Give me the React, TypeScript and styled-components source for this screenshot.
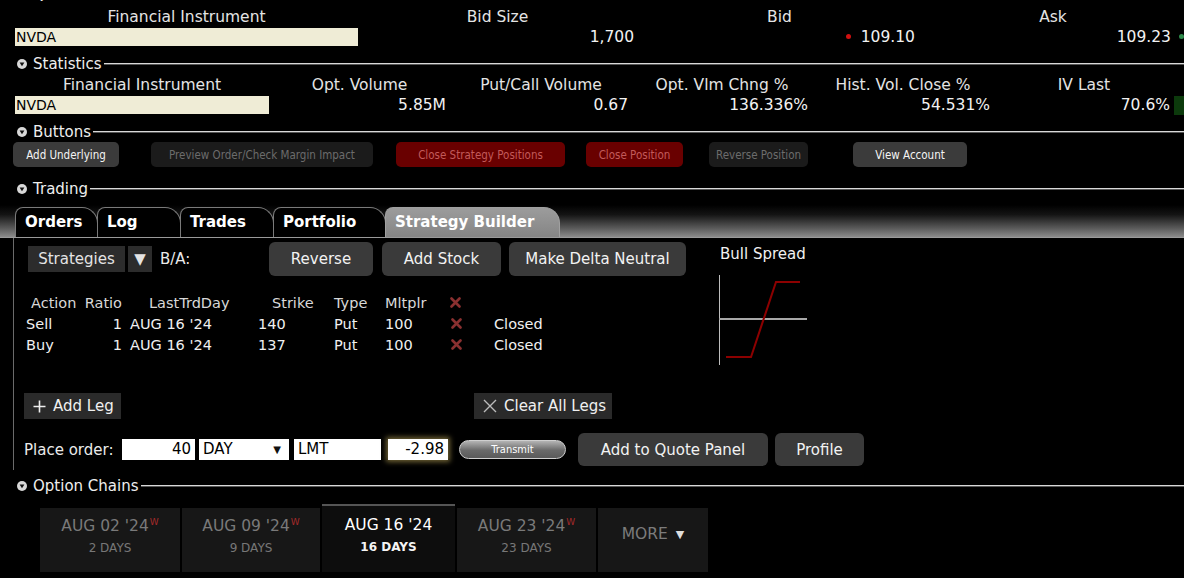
import styled, { createGlobalStyle } from "styled-components";

const GlobalStyle = createGlobalStyle`
  html, body {
    margin: 0;
    padding: 0;
    background: #000;
  }
  body {
    font-family: "DejaVu Sans", "Liberation Sans", sans-serif;
    color: #eee;
  }
`;

const Page = styled.div`
  width: 1184px;
  height: 578px;
  overflow: hidden;
  background: #000;
`;

/* ---------- section headers ---------- */

const SectionRow = styled.div<{ mt?: number }>`
  display: flex;
  align-items: center;
  height: 18px;
  padding-left: 17px;
  margin-top: ${({ mt = 0 }) => mt}px;
`;

const SectionLabel = styled.span`
  font-size: 15px;
  color: #eee;
  margin: 0 2px 0 6px;
  white-space: nowrap;
`;

const SectionLine = styled.div`
  flex: 1;
  height: 0;
  border-top: 1px solid #d8d8d8;
  border-bottom: 1px solid #555;
`;

const CollapseIcon = () => (
  <svg width="10" height="10" viewBox="0 0 10 10">
    <circle cx="5" cy="5" r="5" fill="#d8d8d8" />
    <path d="M2.6 3.6 L7.4 3.6 L5 7.2 Z" fill="#111" />
  </svg>
);

const Section = ({ title, mt }: { title: string; mt?: number }) => (
  <SectionRow mt={mt}>
    <CollapseIcon />
    <SectionLabel>{title}</SectionLabel>
    <SectionLine />
  </SectionRow>
);

/* ---------- quote / statistics grids ---------- */

const DataGrid = styled.div<{ cols: string; mt?: number }>`
  display: grid;
  grid-template-columns: ${({ cols }) => cols};
  padding-left: 15px;
  margin-top: ${({ mt = 0 }) => mt}px;
  row-gap: 1px;
`;

const HeadCell = styled.div`
  text-align: center;
  font-size: 15.5px;
  color: #e4e4e4;
  height: 19px;
  line-height: 19px;
  white-space: nowrap;
`;

const SymbolCell = styled.div`
  background: #efecd6;
  color: #000;
  font-size: 14px;
  height: 18px;
  line-height: 18px;
  padding-left: 1px;
`;

const ValueCell = styled.div<{ pr?: number }>`
  text-align: right;
  font-size: 15.5px;
  height: 19px;
  line-height: 19px;
  color: #f2f2f2;
  padding-right: ${({ pr = 4 }) => pr}px;
  white-space: nowrap;
`;

const TickDot = styled.span<{ color: string; after?: boolean }>`
  display: inline-block;
  width: 5px;
  height: 5px;
  border-radius: 50%;
  background: ${({ color }) => color};
  vertical-align: middle;
  margin: ${({ after }) => (after ? "0 0 2px 8px" : "0 10px 2px 0")};
`;

const TrendBox = styled.div`
  height: 19px;
  background: #0c3a0c;
`;

/* ---------- button strip ---------- */

const ButtonStrip = styled.div`
  display: flex;
  align-items: center;
  height: 25px;
  margin-top: 1px;
`;

type Tone = "plain" | "muted" | "danger";

const tones: Record<Tone, { bg: string; fg: string }> = {
  plain: { bg: "#3b3b3b", fg: "#f4f4f4" },
  muted: { bg: "#1b1b1b", fg: "#6c6c6c" },
  danger: { bg: "#690000", fg: "#c25a5a" },
};

const PanelButton = styled.div<{ w: number; ml: number; tone: Tone }>`
  width: ${({ w }) => w}px;
  margin-left: ${({ ml }) => ml}px;
  height: 25px;
  border-radius: 5px;
  background: ${({ tone }) => tones[tone].bg};
  color: ${({ tone }) => tones[tone].fg};
  font-size: 11.5px;
  font-stretch: condensed;
  display: flex;
  align-items: center;
  justify-content: center;
  white-space: nowrap;
`;

/* ---------- tabs ---------- */

const TabBar = styled.div`
  margin-top: 7px;
  height: 32px;
  display: flex;
  align-items: flex-end;
  padding-left: 15px;
  background: linear-gradient(#000 0%, #141414 30%, #5e5e5e 75%, #8a8a8a 100%);
  border-bottom: 1px solid #9a9a9a;
`;

const Tab = styled.div<{ w: number; active?: boolean }>`
  width: ${({ w }) => w}px;
  height: 30px;
  box-sizing: border-box;
  padding: 5px 0 0 9px;
  font-size: 15px;
  font-weight: bold;
  color: #fff;
  border: 1px solid ${({ active }) => (active ? "#a0a0a0" : "#7a7a7a")};
  border-bottom: none;
  border-radius: 8px 16px 0 0;
  background: ${({ active }) => (active ? "linear-gradient(#9c9c9c, #858585)" : "#000")};
  margin-right: -1px;
`;

const TradingPanel = styled.div`
  margin-left: 13px;
  border-left: 1px solid #6a6a6a;
  padding: 4px 0 0 10px;
  height: 228px;
  margin-bottom: 7px;
`;

const TopArea = styled.div`
  display: flex;
  height: 123px;
`;

const BuilderColumn = styled.div`
  width: 662px;
`;

const Toolbar = styled.div`
  display: flex;
  align-items: center;
  height: 34px;
`;

const SelectBox = styled.div<{ w: number; ml?: number }>`
  width: ${({ w }) => w}px;
  margin-left: ${({ ml = 0 }) => ml}px;
  height: 26px;
  background: #2c2c2c;
  color: #e4e4e4;
  font-size: 15px;
  display: flex;
  align-items: center;
  justify-content: center;
`;

const PlainLabel = styled.span<{ ml?: number; w?: number }>`
  font-size: 15px;
  color: #eaeaea;
  margin-left: ${({ ml = 0 }) => ml}px;
  width: ${({ w }) => (w ? `${w}px` : "auto")};
  white-space: nowrap;
`;

const RoundButton = styled.div<{ w: number; ml: number; h?: number }>`
  width: ${({ w }) => w}px;
  height: ${({ h = 34 }) => h}px;
  margin-left: ${({ ml }) => ml}px;
  background: #3a3a3a;
  border-radius: 6px;
  color: #f2f2f2;
  font-size: 15px;
  display: flex;
  align-items: center;
  justify-content: center;
  white-space: nowrap;
`;

/* ---------- legs table ---------- */

const LegTable = styled.div`
  margin: 16px 0 0 2px;
  display: grid;
  grid-template-columns: 57px 39px 128px 80px 51px 65px 44px 80px;
  grid-auto-rows: 21px;
  font-size: 14.5px;
  align-items: center;
`;

const LegCell = styled.div<{ pl?: number; right?: boolean; dim?: boolean }>`
  padding-left: ${({ pl = 0 }) => pl}px;
  text-align: ${({ right }) => (right ? "right" : "left")};
  color: ${({ dim }) => (dim ? "#d8d8d8" : "#f0f0f0")};
  white-space: nowrap;
`;

const RemoveMark = () => (
  <svg width="11" height="11" viewBox="0 0 11 11">
    <path d="M1.5 1.5 L9.5 9.5 M9.5 1.5 L1.5 9.5" stroke="#8a3030" strokeWidth="2.6" strokeLinecap="round" />
  </svg>
);

/* ---------- payoff chart ---------- */

const ChartColumn = styled.div`
  margin-left: 34px;
  padding-top: 3px;
`;

const ChartTitle = styled.div`
  font-size: 15px;
  color: #f0f0f0;
  height: 17px;
`;

const PayoffChart = () => (
  <svg width="92" height="92" viewBox="0 0 92 92" style={{ display: "block", marginTop: 12, marginLeft: -1 }}>
    <line x1="0.5" y1="1" x2="0.5" y2="91" stroke="#bdbdbd" strokeWidth="1" />
    <line x1="0" y1="45" x2="88" y2="45" stroke="#a8a8a8" strokeWidth="2" />
    <polyline points="7,83 32,83 57,8 81,8" fill="none" stroke="#8c0000" strokeWidth="2" />
  </svg>
);

/* ---------- leg actions / order line ---------- */

const ActionRow = styled.div`
  display: flex;
  align-items: center;
  margin-top: 28px;
  height: 26px;
`;

const FlatButton = styled.div<{ w: number; ml?: number }>`
  width: ${({ w }) => w}px;
  margin-left: ${({ ml = 0 }) => ml}px;
  height: 26px;
  background: #2a2a2a;
  color: #f0f0f0;
  font-size: 15px;
  display: flex;
  align-items: center;
  gap: 7px;
  padding-left: 9px;
  box-sizing: border-box;
  white-space: nowrap;
`;

const OrderRow = styled.div`
  display: flex;
  align-items: center;
  margin-top: 14px;
  height: 33px;
`;

const Field = styled.div<{ w: number; ml: number; right?: boolean; glow?: boolean }>`
  width: ${({ w }) => w}px;
  margin-left: ${({ ml }) => ml}px;
  height: 21px;
  box-sizing: border-box;
  background: #fff;
  color: #000;
  font-size: 15px;
  line-height: 21px;
  padding: 0 4px;
  display: flex;
  align-items: center;
  justify-content: ${({ right }) => (right ? "flex-end" : "space-between")};
  box-shadow: ${({ glow }) => (glow ? "0 0 5px 2px rgba(170, 150, 80, 0.65)" : "none")};
`;

const Caret = styled.span`
  font-size: 10px;
  color: #111;
  margin-right: 4px;
`;

const TransmitPill = styled.div`
  width: 107px;
  height: 19px;
  margin-left: 11px;
  box-sizing: border-box;
  border-radius: 10px;
  border: 1px solid #cfcfcf;
  background: linear-gradient(#b4b4b4, #6a6a6a 55%, #5a5a5a);
  color: #fff;
  font-size: 11px;
  font-stretch: condensed;
  display: flex;
  align-items: center;
  justify-content: center;
`;

/* ---------- option chain expiries ---------- */

const ExpiryStrip = styled.div`
  display: flex;
  align-items: flex-end;
  gap: 2px;
  margin: 9px 0 0 40px;
  height: 68px;
`;

const Expiry = styled.div<{ w: number; active?: boolean }>`
  width: ${({ w }) => w}px;
  height: ${({ active }) => (active ? 68 : 64)}px;
  box-sizing: border-box;
  background: ${({ active }) => (active ? "#0d0d0d" : "#171717")};
  border-top: ${({ active }) => (active ? "2px solid #555" : "none")};
  display: flex;
  flex-direction: column;
  align-items: center;
  padding-top: ${({ active }) => (active ? 10 : 9)}px;
  color: ${({ active }) => (active ? "#fff" : "#7a7a7a")};
`;

const ExpiryDate = styled.div`
  font-size: 15.5px;
  height: 20px;
  white-space: nowrap;
`;

const WeeklyMark = styled.sup`
  font-size: 9px;
  color: #a52a2a;
  margin-left: 1px;
  vertical-align: 6px;
`;

const ExpiryDays = styled.div<{ active?: boolean }>`
  font-size: 12px;
  margin-top: 4px;
  font-weight: ${({ active }) => (active ? "bold" : "normal")};
  color: ${({ active }) => (active ? "#f4f4f4" : "#777")};
`;

const MoreTab = styled.div`
  width: 110px;
  height: 64px;
  background: #171717;
  color: #7c7c7c;
  font-size: 15.5px;
  display: flex;
  justify-content: center;
  padding-top: 17px;
  box-sizing: border-box;
  gap: 8px;
`;

const MoreCaret = styled.span`
  font-size: 11px;
  color: #ddd;
  margin-top: 3px;
`;

const legs = [
  { action: "Sell", ratio: "1", date: "AUG 16 '24", strike: "140", type: "Put", mult: "100", status: "Closed" },
  { action: "Buy", ratio: "1", date: "AUG 16 '24", strike: "137", type: "Put", mult: "100", status: "Closed" },
];

const expiries = [
  { date: "AUG 02 '24", days: "2 DAYS", weekly: true, w: 140 },
  { date: "AUG 09 '24", days: "9 DAYS", weekly: true, w: 138 },
  { date: "AUG 16 '24", days: "16 DAYS", weekly: false, w: 133, active: true },
  { date: "AUG 23 '24", days: "23 DAYS", weekly: true, w: 139 },
];

export default function App() {
  return (
    <Page>
      <GlobalStyle />
      <Section title="Quotes" mt={-15} />

      <DataGrid cols="343px 279px 285px 262px" mt={5}>
        <HeadCell>Financial Instrument</HeadCell>
        <HeadCell>Bid Size</HeadCell>
        <HeadCell>Bid</HeadCell>
        <HeadCell>Ask</HeadCell>
        <SymbolCell>NVDA</SymbolCell>
        <ValueCell pr={3}>1,700</ValueCell>
        <ValueCell pr={7}>
          <TickDot color="#d01010" />
          109.10
        </ValueCell>
        <ValueCell pr={0}>
          109.23
          <TickDot color="#2e8a4a" after />
        </ValueCell>
      </DataGrid>

      <Section title="Statistics" mt={8} />

      <DataGrid cols="254px 181px 182px 180px 182px 180px 10px" mt={3}>
        <HeadCell>Financial Instrument</HeadCell>
        <HeadCell>Opt. Volume</HeadCell>
        <HeadCell>Put/Call Volume</HeadCell>
        <HeadCell>Opt. Vlm Chng %</HeadCell>
        <HeadCell>Hist. Vol. Close %</HeadCell>
        <HeadCell>IV Last</HeadCell>
        <div />
        <SymbolCell>NVDA</SymbolCell>
        <ValueCell>5.85M</ValueCell>
        <ValueCell>0.67</ValueCell>
        <ValueCell>136.336%</ValueCell>
        <ValueCell>54.531%</ValueCell>
        <ValueCell>70.6%</ValueCell>
        <TrendBox />
      </DataGrid>

      <Section title="Buttons" mt={8} />
      <ButtonStrip>
        <PanelButton tone="plain" w={106} ml={13}>Add Underlying</PanelButton>
        <PanelButton tone="muted" w={222} ml={32}>Preview Order/Check Margin Impact</PanelButton>
        <PanelButton tone="danger" w={169} ml={23}>Close Strategy Positions</PanelButton>
        <PanelButton tone="danger" w={97} ml={21}>Close Position</PanelButton>
        <PanelButton tone="muted" w={99} ml={26}>Reverse Position</PanelButton>
        <PanelButton tone="plain" w={114} ml={45}>View Account</PanelButton>
      </ButtonStrip>

      <Section title="Trading" mt={13} />
      <TabBar>
        <Tab w={83}>Orders</Tab>
        <Tab w={84}>Log</Tab>
        <Tab w={94}>Trades</Tab>
        <Tab w={113}>Portfolio</Tab>
        <Tab w={175} active>Strategy Builder</Tab>
      </TabBar>

      <TradingPanel>
        <TopArea>
          <BuilderColumn>
            <Toolbar>
              <SelectBox w={97} ml={4}>Strategies</SelectBox>
              <SelectBox w={24} ml={3}>▼</SelectBox>
              <PlainLabel ml={8} w={109}>B/A:</PlainLabel>
              <RoundButton w={104} ml={0}>Reverse</RoundButton>
              <RoundButton w={119} ml={9}>Add Stock</RoundButton>
              <RoundButton w={177} ml={8}>Make Delta Neutral</RoundButton>
            </Toolbar>

            <LegTable>
              <LegCell pl={5} dim>Action</LegCell>
              <LegCell right dim>Ratio</LegCell>
              <LegCell pl={27} dim>LastTrdDay</LegCell>
              <LegCell pl={22} dim>Strike</LegCell>
              <LegCell pl={4} dim>Type</LegCell>
              <LegCell pl={4} dim>Mltplr</LegCell>
              <LegCell pl={4}><RemoveMark /></LegCell>
              <div />
              {legs.map((leg) => [
                <LegCell key={leg.action + "a"}>{leg.action}</LegCell>,
                <LegCell key={leg.action + "r"} right>{leg.ratio}</LegCell>,
                <LegCell key={leg.action + "d"} pl={8}>{leg.date}</LegCell>,
                <LegCell key={leg.action + "s"} pl={8}>{leg.strike}</LegCell>,
                <LegCell key={leg.action + "t"} pl={4}>{leg.type}</LegCell>,
                <LegCell key={leg.action + "m"} pl={4}>{leg.mult}</LegCell>,
                <LegCell key={leg.action + "x"} pl={5}><RemoveMark /></LegCell>,
                <LegCell key={leg.action + "c"} pl={4}>{leg.status}</LegCell>,
              ])}
            </LegTable>
          </BuilderColumn>

          <ChartColumn>
            <ChartTitle>Bull Spread</ChartTitle>
            <PayoffChart />
          </ChartColumn>
        </TopArea>

        <ActionRow>
          <FlatButton w={97}>
            <svg width="13" height="13" viewBox="0 0 13 13">
              <path d="M6.5 0.5 V12.5 M0.5 6.5 H12.5" stroke="#eee" strokeWidth="1.6" />
            </svg>
            Add Leg
          </FlatButton>
          <FlatButton w={138} ml={353}>
            <svg width="14" height="14" viewBox="0 0 14 14">
              <path d="M1 1 L13 13 M13 1 L1 13" stroke="#bbb" strokeWidth="1.4" />
            </svg>
            Clear All Legs
          </FlatButton>
        </ActionRow>

        <OrderRow>
          <PlainLabel w={88}>Place order:</PlainLabel>
          <Field w={73} ml={10} right>40</Field>
          <Field w={90} ml={4}>
            DAY
            <Caret>▼</Caret>
          </Field>
          <Field w={87} ml={5}>LMT</Field>
          <Field w={60} ml={7} right glow>-2.98</Field>
          <TransmitPill>Transmit</TransmitPill>
          <RoundButton w={190} ml={12} h={33}>Add to Quote Panel</RoundButton>
          <RoundButton w={89} ml={7} h={33}>Profile</RoundButton>
        </OrderRow>
      </TradingPanel>

      <Section title="Option Chains" />
      <ExpiryStrip>
        {expiries.map((e) => (
          <Expiry key={e.date} w={e.w} active={e.active}>
            <ExpiryDate>
              {e.date}
              {e.weekly && <WeeklyMark>W</WeeklyMark>}
            </ExpiryDate>
            <ExpiryDays active={e.active}>{e.days}</ExpiryDays>
          </Expiry>
        ))}
        <MoreTab>
          MORE
          <MoreCaret>▼</MoreCaret>
        </MoreTab>
      </ExpiryStrip>
    </Page>
  );
}
